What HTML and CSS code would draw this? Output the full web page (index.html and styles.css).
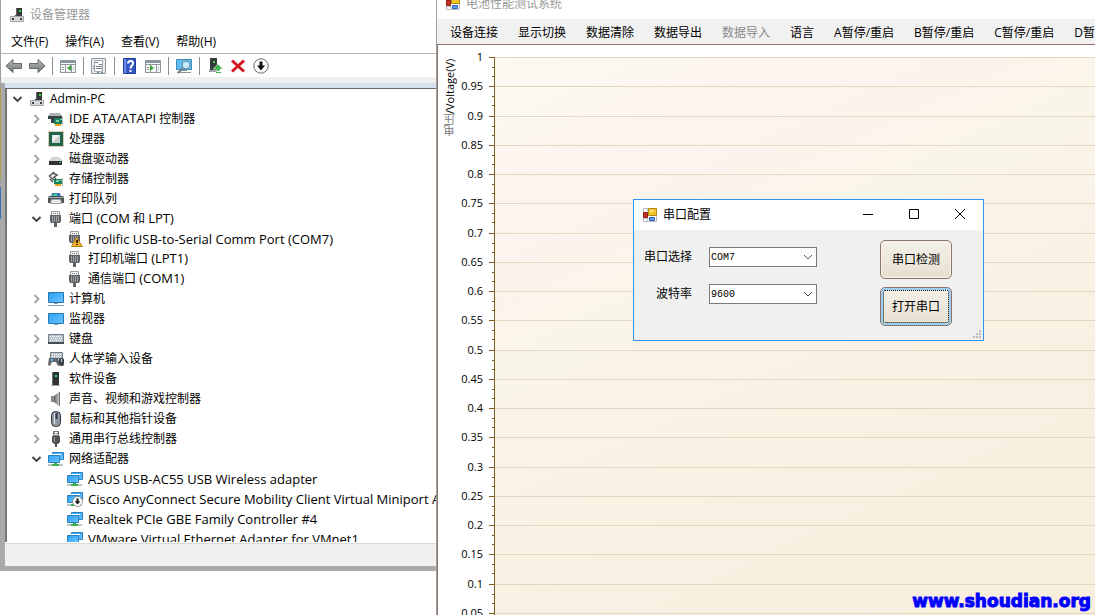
FILE: index.html
```html
<!DOCTYPE html>
<html lang="zh-CN">
<head>
<meta charset="utf-8">
<title>设备管理器</title>
<link rel="stylesheet" href="styles.css">
</head>
<body>
<svg class="sprite" aria-hidden="true">
  <defs>
    <linearGradient id="screen" x1="0" y1="0" x2="1" y2="1"><stop offset="0" stop-color="#2a9ff5"/><stop offset="1" stop-color="#6cc6ff"/></linearGradient>
    <linearGradient id="metal" x1="0" y1="0" x2="0" y2="1"><stop offset="0" stop-color="#b9bcbd"/><stop offset="1" stop-color="#717476"/></linearGradient>
    <linearGradient id="cone" x1="0" y1="0" x2="1" y2="0"><stop offset="0" stop-color="#5e6366"/><stop offset="1" stop-color="#c3c7c9"/></linearGradient>
  </defs>
  <symbol id="pc" viewBox="0 0 16 16"><path fill="#34383a" d="M7 1h6v8H7z"/><path fill="#60676a" d="M7 1h1v8H7z"/><path fill="#31d843" d="M10 3h2v2h-2z"/><path fill="#d5d7d8" stroke="#a3a7a9" d="M1.500 9.500h13v5h-13z"/><path fill="#3b4042" d="M3 11h2v2H3zM11 11h2v2h-2zM6 8h5v1H6z"/></symbol>
  <symbol id="card" viewBox="0 0 16 16"><path fill="#aeb4b5" d="M2 2h10l2 3H0z"/><path fill="#3a4142" d="M0 5h14v3H0zM3 8h3v4H3z"/><path fill="#1c805e" d="M6 7h9v6H6z"/><path fill="#7cd9a4" d="M8 9h3v2H8zM12 8h2v1h-2z"/><path fill="#b8c5bd" d="M14 6h1v9h-1z"/><path fill="#e7a51e" d="M7 13h6v2H7z"/></symbol>
  <symbol id="cpu" viewBox="0 0 16 16"><path fill="none" stroke="#b3a25a" stroke-width="1" stroke-dasharray="1 1" d="M.500.500h15v15H.500z"/><path fill="#23624c" d="M1 1h14v14H1z"/><path fill="#c5cec9" d="M4 4h8v8H4z"/><path fill="#e9eeeb" d="M4 4h8L4 12z"/></symbol>
  <symbol id="disk" viewBox="0 0 16 16"><path fill="#d3d5d7" d="M4 6h7l4 4H1z"/><path fill="#2e3233" d="M1 10h13v4H1z"/><path fill="#3ae24e" d="M11 11h2v1h-2z"/></symbol>
  <symbol id="storage" viewBox="0 0 16 16"><path fill="none" stroke="#4c5254" stroke-width="1.500" d="M6 1 1.500 5 6 9M5 2l4 2-3 2 2 2M2 8l3 3"/><path fill="#1c805e" d="M6 8h9v5H6z"/><path fill="#7cd9a4" d="M8 9h3v2H8zM12 9h2v1h-2z"/><path fill="#e7a51e" d="M7 13h6v2H7z"/><path fill="#a9b8af" d="M14 7h1v8h-1z"/></symbol>
  <symbol id="printer" viewBox="0 0 16 16"><path fill="#3a78bd" d="M4 2h8l1 4H3z"/><path fill="#41ce85" d="M5 3h4v2H5z"/><path fill="#4c5254" d="M1 5h14l1 2v5h-3V9H3v3H0V7z"/><path fill="#e7eaec" stroke="#9ea4a6" d="M3.500 8.500h9l1 4h-11z"/><path fill="#9bb3bc" d="M1 6h14v1H1z"/></symbol>
  <symbol id="port" viewBox="0 0 16 16"><path fill="#f4f4f4" stroke="#9b9d9e" d="M3.500.500h8v4h-8z"/><path fill="#777" d="M5 2h1v1H5zM7 2h1v1H7zM9 2h1v1H9z"/><path fill="#5e6264" d="M2 4h11v6l-1 2H9v4H6v-4H3l-1-2z"/><path fill="#9da1a3" d="M4 5h1v6H4zM6 5h1v6H6zM8 5h1v6H8zM10 5h1v6h-1z"/></symbol>
  <symbol id="portwarn" viewBox="0 0 16 16"><use href="#port"/><path fill="#f5b52b" stroke="#b57b0a" d="M9.500 6.500 4.500 15.500h10.900z"/><path fill="#3a2a08" d="M9 9h2v3H9zM9 13h2v1H9z"/></symbol>
  <symbol id="computer" viewBox="0 0 16 16"><path fill="url(#screen)" stroke="#2878ae" d="M.500 1.500h15v10H.500z"/><path fill="#8ea0ad" d="M6 12h4v1H6zM0 14h16v1H0z"/></symbol>
  <symbol id="monitor" viewBox="0 0 16 16"><path fill="url(#screen)" stroke="#2878ae" d="M.500 2.500h15v10H.500z"/><path fill="#8ea0ad" d="M6 13h4v1H6z"/></symbol>
  <symbol id="keyboard" viewBox="0 0 16 16"><path fill="#b9c1ca" stroke="#78818a" d="M.500 3.500h15v8H.500z"/><path stroke="#fff" stroke-dasharray="1 1" d="M2 5.500h12M3 7.500h11M2 9.500h12"/><path fill="#454d55" d="M0 11h16v2H0z"/></symbol>
  <symbol id="hid" viewBox="0 0 16 16"><path fill="#b9c1ca" stroke="#78818a" d="M2.500 1.500h12v6h-12z"/><path stroke="#fff" stroke-dasharray="1 1" d="M4 3.500h10M4 5.500h10"/><path fill="#5f676e" d="M1 7h9l2 7-2 1-2-4H4l-2 4-2-1z"/><path fill="#55b8f1" d="M3 8h2v2H3z"/><rect x="11" y="7" width="5" height="8" rx="2" fill="#39434c"/><path fill="#c9d4dc" d="M13 8h1v3h-1z"/></symbol>
  <symbol id="software" viewBox="0 0 16 16"><path fill="#303436" d="M4 1h7v13H4z"/><path fill="#6b7072" d="M4 1h1v13H4z"/><path fill="#33e04b" d="M7 4h2v2H7z"/><path fill="#a5a9ab" d="M3 14h9v1H3z"/></symbol>
  <symbol id="sound" viewBox="0 0 16 16"><path fill="#858b8e" d="M3 5h3v6H3z"/><path fill="url(#cone)" d="M6 5 11 1v14l-5-4z"/><path stroke="#6e7477" d="M11.500 1v14"/></symbol>
  <symbol id="mouse" viewBox="0 0 16 16"><rect x="3.500" y=".500" width="9" height="15" rx="4" fill="#8f98a2" stroke="#2c343c"/><path fill="#e1e5e8" d="M6 2h1v11H6z"/><path stroke="#2c343c" stroke-width="2" d="M8.500 2v6"/></symbol>
  <symbol id="usb" viewBox="0 0 16 16"><path fill="#e8e8e8" stroke="#707476" d="M5.500.500h5v4h-5z"/><path fill="#333" d="M6 2h1v1H6zM9 2h1v1H9z"/><path fill="#505456" d="M4 5h8v6l-2 2H9v3H7v-3H6l-2-2z"/><path fill="#9b9fa1" d="M6 6h1v5H6z"/></symbol>
  <symbol id="network" viewBox="0 0 16 16"><path fill="#bec4c6" d="M0 13h15v2H0z"/><path fill="#38b34a" d="M6 11h3v2h2v2H4v-2h2z"/><path fill="url(#screen)" stroke="#2a83bf" d="M4.500 1.500h11v7h-11z"/><path fill="#fff" d="M0 3h13v1H0z"/><path fill="url(#screen)" stroke="#2a83bf" d="M.500 4.500h11v7H.500z"/></symbol>
  <symbol id="down" viewBox="0 0 16 16"><circle cx="8" cy="8" r="7.200" fill="#fff" stroke="#6b6b6b"/><path fill="#111" d="M6.500 3.500h3v4H12l-4 5-4-5h2.500z"/></symbol>
  <symbol id="netdown" viewBox="0 0 16 16"><use href="#network"/><use href="#down" x="5" y="5" width="11" height="11"/></symbol>
  <symbol id="closed" viewBox="0 0 16 16"><path fill="none" stroke="#a3a3a3" stroke-width="1.800" d="m5.500 4 4 4-4 4"/></symbol>
  <symbol id="open" viewBox="0 0 16 16"><path fill="none" stroke="#404040" stroke-width="1.800" d="m3.500 6 4 4 4-4"/></symbol>
  <symbol id="back" viewBox="0 0 18 16"><path fill="url(#metal)" stroke="#65696b" d="M1 8 8 1.500v4h8.500v5H8v4z"/></symbol>
  <symbol id="forward" viewBox="0 0 18 16"><path fill="url(#metal)" stroke="#65696b" d="M17 8 10 1.500v4H1.500v5H10v4z"/></symbol>
  <symbol id="panel" viewBox="0 0 18 16"><path fill="#f7f8f8" stroke="#8c969c" d="M1.500 2.500h15v12h-15z"/><path fill="#8797a2" d="M2 3h14v2H2z"/><path stroke="#8c969c" d="M2 6.500h14M6.500 7v7M12.500 7v7M3 9.500h2M3 11.500h2M14 9.500h1M14 11.500h1"/></symbol>
  <symbol id="console" viewBox="0 0 18 16"><use href="#panel"/><path fill="#34a531" d="M12 7v6L8 10z"/></symbol>
  <symbol id="action" viewBox="0 0 18 16"><use href="#panel"/><path fill="#34a531" d="M6 7v6l4-3z"/></symbol>
  <symbol id="props" viewBox="0 0 18 16"><path fill="#e9edef" stroke="#8c969c" d="M1.500.500h14v15h-14z"/><path fill="#fff" stroke="#a0aab0" d="M4.500 2.500h8v11h-8z"/><path stroke="#78868f" d="M5 4.500h3M9 6.500h3M3 8.500h2M6 8.500h6M3 10.500h2M6 10.500h6M7 14.500h2M11 14.500h2"/></symbol>
  <symbol id="help" viewBox="0 0 14 16"><path fill="#3559c4" stroke="#213f9a" d="M.500.500h12v15h-12z"/><path fill="#6c8be5" d="M1 1h2v14H1z"/><path fill="none" stroke="#fff" stroke-width="2" d="M5 5.500C5 2 10.500 2 10 5.500 10 7.500 7.500 7.500 7.500 10.500"/><path fill="#fff" d="M6.500 12h2v2h-2z"/></symbol>
  <symbol id="scan" viewBox="0 0 18 16"><path fill="#62bdf0" stroke="#3f8fba" d="M1.500 1.500h15v10h-15z"/><path fill="#8d999f" d="M6 12h6v1H6zM2 14h14v1H2z"/><path stroke="#717c82" stroke-width="2" d="m8 10-5 5"/><circle cx="11" cy="7" r="4" fill="#c3e8fb" stroke="#5d8ba3"/></symbol>
  <symbol id="enable" viewBox="0 0 16 16"><path fill="#34393b" d="M3 0h7v12H3z"/><path fill="#34e04b" d="M6 3h2v2H6z"/><path fill="#9fa4a6" d="M2 12h8v2H2z"/><path fill="#3ab54b" stroke="#fff" stroke-width=".500" d="M11 6l5 5h-3v2H9v-2H6z"/><path fill="#3ab54b" d="M9 14h5v1H9z"/></symbol>
  <symbol id="remove" viewBox="0 0 16 16"><path stroke="#d41421" stroke-width="3" d="m2 2.500 12 11M14 2.500l-12 11"/></symbol>
  <symbol id="form" viewBox="0 0 14 14"><path fill="#fff" stroke="#babcbf" d="M.500.500h13v13H.500z"/><path stroke="#c5c8cb" d="M1 10.500h5M4.500 1v12M1 4.500h5"/><path fill="#f5c62c" stroke="#b68b13" d="M5.500.500h8v7h-8z"/><path fill="#fce893" d="M7 2h3v2H7z"/><path fill="#c53224" stroke="#8f2018" d="M.500 4.500h4v5h-4z"/><path fill="#5c9bf0" stroke="#2e63b8" d="M6.500 9.500h5v3h-5z"/></symbol>
</svg>

<main class="desktop">
  <section class="manager" aria-label="设备管理器">
    <header class="manager-head">
      <div class="manager-title"><svg class="icon"><use href="#pc"/></svg><h1>设备管理器</h1></div>
      <nav class="manager-menu">
        <button>文件(F)</button><button>操作(A)</button><button>查看(V)</button><button>帮助(H)</button>
      </nav>
      <div class="toolbar">
        <button aria-label="后退"><svg class="tool"><use href="#back"/></svg></button>
        <button aria-label="前进"><svg class="tool"><use href="#forward"/></svg></button>
        <span class="sep"></span>
        <button aria-label="显示控制台树"><svg class="tool"><use href="#console"/></svg></button>
        <span class="sep"></span>
        <button aria-label="属性"><svg class="tool"><use href="#props"/></svg></button>
        <span class="sep"></span>
        <button aria-label="帮助"><svg class="tool"><use href="#help"/></svg></button>
        <button aria-label="操作窗格"><svg class="tool"><use href="#action"/></svg></button>
        <span class="sep"></span>
        <button aria-label="扫描硬件改动"><svg class="tool"><use href="#scan"/></svg></button>
        <span class="sep"></span>
        <button aria-label="更新驱动"><svg class="tool"><use href="#enable"/></svg></button>
        <button aria-label="卸载"><svg class="tool"><use href="#remove"/></svg></button>
        <button aria-label="禁用"><svg class="tool"><use href="#down"/></svg></button>
      </div>
    </header>
    <div class="manager-frame">
      <div class="tree">
        <ul>
          <li><div class="node"><button aria-label="折叠"><svg class="icon"><use href="#open"/></svg></button><svg class="icon"><use href="#pc"/></svg><span>Admin-PC</span></div>
            <ul>
              <li><div class="node"><button aria-label="展开"><svg class="icon"><use href="#closed"/></svg></button><svg class="icon"><use href="#card"/></svg><span><span class="latin">IDE ATA/ATAPI</span> 控制器</span></div></li>
              <li><div class="node"><button aria-label="展开"><svg class="icon"><use href="#closed"/></svg></button><svg class="icon"><use href="#cpu"/></svg><span>处理器</span></div></li>
              <li><div class="node"><button aria-label="展开"><svg class="icon"><use href="#closed"/></svg></button><svg class="icon"><use href="#disk"/></svg><span>磁盘驱动器</span></div></li>
              <li><div class="node"><button aria-label="展开"><svg class="icon"><use href="#closed"/></svg></button><svg class="icon"><use href="#storage"/></svg><span>存储控制器</span></div></li>
              <li><div class="node"><button aria-label="展开"><svg class="icon"><use href="#closed"/></svg></button><svg class="icon"><use href="#printer"/></svg><span>打印队列</span></div></li>
              <li><div class="node"><button aria-label="折叠"><svg class="icon"><use href="#open"/></svg></button><svg class="icon"><use href="#port"/></svg><span>端口 <span class="latin">(COM</span> 和 <span class="latin">LPT)</span></span></div>
                <ul>
                  <li><div class="node leaf"><svg class="icon"><use href="#portwarn"/></svg><span class="latin">Prolific USB-to-Serial Comm Port (COM7)</span></div></li>
                  <li><div class="node leaf"><svg class="icon"><use href="#port"/></svg><span>打印机端口 <span class="latin">(LPT1)</span></span></div></li>
                  <li><div class="node leaf"><svg class="icon"><use href="#port"/></svg><span>通信端口 <span class="latin">(COM1)</span></span></div></li>
                </ul>
              </li>
              <li><div class="node"><button aria-label="展开"><svg class="icon"><use href="#closed"/></svg></button><svg class="icon"><use href="#computer"/></svg><span>计算机</span></div></li>
              <li><div class="node"><button aria-label="展开"><svg class="icon"><use href="#closed"/></svg></button><svg class="icon"><use href="#monitor"/></svg><span>监视器</span></div></li>
              <li><div class="node"><button aria-label="展开"><svg class="icon"><use href="#closed"/></svg></button><svg class="icon"><use href="#keyboard"/></svg><span>键盘</span></div></li>
              <li><div class="node"><button aria-label="展开"><svg class="icon"><use href="#closed"/></svg></button><svg class="icon"><use href="#hid"/></svg><span>人体学输入设备</span></div></li>
              <li><div class="node"><button aria-label="展开"><svg class="icon"><use href="#closed"/></svg></button><svg class="icon"><use href="#software"/></svg><span>软件设备</span></div></li>
              <li><div class="node"><button aria-label="展开"><svg class="icon"><use href="#closed"/></svg></button><svg class="icon"><use href="#sound"/></svg><span>声音、视频和游戏控制器</span></div></li>
              <li><div class="node"><button aria-label="展开"><svg class="icon"><use href="#closed"/></svg></button><svg class="icon"><use href="#mouse"/></svg><span>鼠标和其他指针设备</span></div></li>
              <li><div class="node"><button aria-label="展开"><svg class="icon"><use href="#closed"/></svg></button><svg class="icon"><use href="#usb"/></svg><span>通用串行总线控制器</span></div></li>
              <li><div class="node"><button aria-label="折叠"><svg class="icon"><use href="#open"/></svg></button><svg class="icon"><use href="#network"/></svg><span>网络适配器</span></div>
                <ul>
                  <li><div class="node leaf"><svg class="icon"><use href="#network"/></svg><span class="latin">ASUS USB-AC55 USB Wireless adapter</span></div></li>
                  <li><div class="node leaf"><svg class="icon"><use href="#netdown"/></svg><span class="latin">Cisco AnyConnect Secure Mobility Client Virtual Miniport Adapter</span></div></li>
                  <li><div class="node leaf"><svg class="icon"><use href="#network"/></svg><span class="latin">Realtek PCIe GBE Family Controller #4</span></div></li>
                  <li><div class="node leaf"><svg class="icon"><use href="#network"/></svg><span class="latin">VMware Virtual Ethernet Adapter for VMnet1</span></div></li>
                </ul>
              </li>
            </ul>
          </li>
        </ul>
      </div>
      <div class="status"></div>
    </div>
  </section>

  <section class="tester" aria-label="电池性能测试系统">
    <header class="tester-title"><svg class="form-icon"><use href="#form"/></svg><h2>电池性能测试系统</h2></header>
    <nav class="tester-menu">
      <button>设备连接</button><button>显示切换</button><button>数据清除</button><button>数据导出</button><button disabled>数据导入</button><button>语言</button><button>A暂停/重启</button><button>B暂停/重启</button><button>C暂停/重启</button><button>D暂停/重启</button>
    </nav>
    <div class="chart">
      <div class="axis-title"><span>电压</span>/Voltage(V)</div>
      <div class="plot">
        <ol class="scale">
          <li><span>1</span></li><li><span>0.95</span></li><li><span>0.9</span></li><li><span>0.85</span></li><li><span>0.8</span></li>
          <li><span>0.75</span></li><li><span>0.7</span></li><li><span>0.65</span></li><li><span>0.6</span></li><li><span>0.55</span></li>
          <li><span>0.5</span></li><li><span>0.45</span></li><li><span>0.4</span></li><li><span>0.35</span></li><li><span>0.3</span></li>
          <li><span>0.25</span></li><li><span>0.2</span></li><li><span>0.15</span></li><li><span>0.1</span></li><li><span>0.05</span></li>
        </ol>
      </div>
    </div>
  </section>

  <section class="dialog" role="dialog" aria-label="串口配置">
    <header class="dialog-title">
      <svg class="form-icon"><use href="#form"/></svg><h2>串口配置</h2>
      <button aria-label="最小化"><svg class="caption" viewBox="0 0 12 12"><path d="M1 5.500h10"/></svg></button>
      <button aria-label="最大化"><svg class="caption" viewBox="0 0 12 12"><path d="M1.500.500h9v9h-9z"/></svg></button>
      <button aria-label="关闭"><svg class="caption" viewBox="0 0 12 12"><path d="m1 0 10 10M11 0 1 10"/></svg></button>
    </header>
    <form class="dialog-body">
      <div class="fields">
        <label for="port-select">串口选择</label>
        <div class="combo"><select id="port-select"><option>COM7</option></select><svg viewBox="0 0 10 10"><path d="m1 3 4 4 4-4"/></svg></div>
        <label for="baud-select">波特率</label>
        <div class="combo"><select id="baud-select"><option>9600</option></select><svg viewBox="0 0 10 10"><path d="m1 3 4 4 4-4"/></svg></div>
      </div>
      <div class="actions">
        <button type="button">串口检测</button>
        <button type="button" class="focused">打开串口</button>
      </div>
    </form>
    <svg class="grip" viewBox="0 0 8 8"><path d="M6 0h2v2H6zM3 3h2v2H3zM6 3h2v2H6zM0 6h2v2H0zM3 6h2v2H3zM6 6h2v2H6z"/></svg>
  </section>

  <a class="watermark" href="#">www.shoudian.org</a>
</main>
</body>
</html>
```
FILE: styles.css
```css
* {
  box-sizing: border-box;
}

body {
  margin: 0;
  overflow: hidden;
  background: #fff;
  color: #000;
  font: 12px/20px "Open Sans", "Noto Sans CJK SC", sans-serif;
}

h1,
h2 {
  margin: 0;
  font-size: 12px;
  font-weight: 400;
}

ul,
ol {
  margin: 0;
  padding: 0;
  list-style: none;
}

button {
  padding: 0;
  border: 0;
  background: none;
  color: inherit;
  font: inherit;
  white-space: nowrap;
}

svg {
  display: block;
  flex: none;
}

.sprite {
  position: absolute;
  width: 0;
  height: 0;
}

.icon {
  width: 16px;
  height: 16px;
}

.desktop {
  position: relative;
  display: grid;
  grid-template-columns: minmax(0, 436fr) minmax(0, 659fr);
  align-items: start;
  height: 100vh;
  overflow: hidden;
}

/* Device manager; the one-pixel strip is the window behind it */
.manager {
  padding-left: 1px;
  background: linear-gradient(#a0a0a0 89px, #b89b45 89px 178px, #a0a0a0 178px 187px, #3f72b0 187px 219px, #a8a8a8 219px) 0 0 / 1px 100% no-repeat;
}

.manager-title {
  display: flex;
  align-items: center;
  gap: 5px;
  height: 30px;
  padding-left: 8px;
  color: #999;
}

.manager-menu {
  display: flex;
  gap: 17px;
  height: 24px;
  padding-left: 10px;
  border-bottom: 1px solid #b4b4b4;
}

.toolbar {
  display: flex;
  align-items: center;
  gap: 5px;
  height: 29px;
  padding: 0 4px;
  border-bottom: 6px solid #f0f0f0;
}

.tool {
  width: 18px;
  height: 16px;
}

.sep {
  width: 1px;
  height: 18px;
  margin: 0 1px;
  background: #8d8d8d;
}

.manager-frame {
  border: solid #aaa;
  border-width: 0 0 5px 4px;
  background: #f0f0f0;
}

.tree {
  height: 460px;
  overflow: hidden;
  border-top: 5px solid #d6e4f1;
  border-bottom: 1px solid #fff;
  background: #fff;
}

.tree > ul {
  padding-left: 3px;
  border-top: 1px solid #696969;
  border-left: 2px solid #777;
}

.tree ul ul {
  padding-left: 19px;
}

.node {
  display: flex;
  align-items: center;
  height: 20px;
  white-space: nowrap;
}

.node > .icon {
  margin: 0 5px 0 3px;
}

.leaf {
  padding-left: 16px;
}

.latin {
  font-size: 13px;
  line-height: 1;
}

.status {
  height: 23px;
  border-top: 1px solid #d9d9d9;
}

/* Battery tester */
.tester {
  border-left: 1px solid #a0a0a0;
  background: #fff;
}

.tester-title {
  display: flex;
  align-items: flex-end;
  gap: 6px;
  height: 19px;
  padding: 0 0 5px 9px;
  color: #999;
}

.tester-title h2 {
  line-height: 20px;
}

.form-icon {
  width: 14px;
  height: 14px;
}

.tester-title .form-icon {
  margin-bottom: 4px;
}

.tester-menu {
  display: flex;
  gap: 20px;
  height: 26px;
  padding: 2px 0 0 13px;
  overflow: hidden;
  border-bottom: 1px solid #8b7365;
  background: #f1f1f1;
}

.tester-menu button {
  flex: none;
}

.tester-menu button:disabled {
  color: #8a8a8a;
}

.chart {
  display: flex;
  padding-top: 12px;
  border-left: 1px solid #8b7365;
}

.axis-title {
  width: 20px;
  padding: 0 5px 2px 0;
  font-size: 11px;
  line-height: 14px;
  writing-mode: vertical-rl;
  transform: rotate(180deg);
  text-align: right;
}

.axis-title span {
  color: #777;
}

.plot {
  flex: 1;
}

.scale {
  display: flex;
  flex-direction: column;
  height: 585px;
  background: linear-gradient(155deg, #fcf8f2, #fcf4ec 25%, #faf5e9 36%, #faf1e5 55%, #f6eddc) 36px 0 no-repeat;
}

.scale li {
  flex: 1;
  background:
    linear-gradient(#806020, #806020) 36px 0 / 1px 100% no-repeat,
    linear-gradient(#806020, #806020) 31px 0 / 5px 1px no-repeat,
    linear-gradient(#806020, #806020) 34px 10px / 2px 1px no-repeat,
    linear-gradient(#806020, #806020) 34px 19px / 2px 1px no-repeat,
    linear-gradient(#e2d8bf, #e2d8bf) 37px 0 / 100% 1px no-repeat;
}

.scale span {
  display: block;
  width: 25px;
  height: 0;
  font-size: 11px;
  line-height: 0;
  text-align: right;
}

/* Serial port dialog */
.dialog {
  position: absolute;
  top: 199px;
  left: 633px;
  width: 351px;
  border: 1px solid #3294ee;
  background: #f0f0f0;
}

.dialog-title {
  display: flex;
  align-items: center;
  height: 30px;
  padding-left: 9px;
  background: #fff;
}

.dialog-title h2 {
  flex: 1;
  padding-left: 6px;
}

.dialog-title button {
  display: grid;
  place-items: center;
  width: 46px;
  height: 30px;
}

.caption {
  width: 12px;
  height: 12px;
  fill: none;
  stroke: #000;
}

.dialog-body {
  display: flex;
  justify-content: space-between;
  height: 110px;
  padding: 10px 31px 0 9px;
}

.fields {
  display: grid;
  grid-template-columns: 49px 108px;
  gap: 17px;
  align-content: start;
  padding-top: 7px;
}

.fields label {
  text-align: right;
}

.combo {
  display: grid;
  align-items: center;
  height: 20px;
}

.combo > * {
  grid-area: 1 / 1;
}

.combo select {
  width: 100%;
  height: 20px;
  padding: 0 1px;
  border: 1px solid #7a7a7a;
  border-radius: 0;
  appearance: none;
  background: #fff;
  color: #000;
  font: 10px "Liberation Mono", monospace;
}

.combo svg {
  justify-self: end;
  width: 10px;
  height: 10px;
  margin-right: 4px;
  fill: none;
  stroke: #555;
  pointer-events: none;
}

.actions {
  display: flex;
  flex-direction: column;
  gap: 8px;
}

.actions button {
  width: 72px;
  height: 39px;
  border: 1px solid #8b7365;
  border-radius: 5px;
  background: linear-gradient(#f3f1e9, #ece6da 60%, #e6dfcc);
  box-shadow: inset 0 0 0 1px #f8f5ee;
}

.actions .focused {
  outline: 1px dotted #000;
  outline-offset: -4px;
  box-shadow: inset 0 0 0 2px #9bcdf5;
}

.grip {
  position: absolute;
  right: 2px;
  bottom: 2px;
  width: 8px;
  height: 8px;
  fill: #bdbdbd;
}

.watermark {
  position: absolute;
  right: 4px;
  bottom: 4px;
  color: #00f;
  font: 700 17px/20px "DejaVu Sans", sans-serif;
  text-decoration: none;
  -webkit-text-stroke: 1px #00f;
}
```
